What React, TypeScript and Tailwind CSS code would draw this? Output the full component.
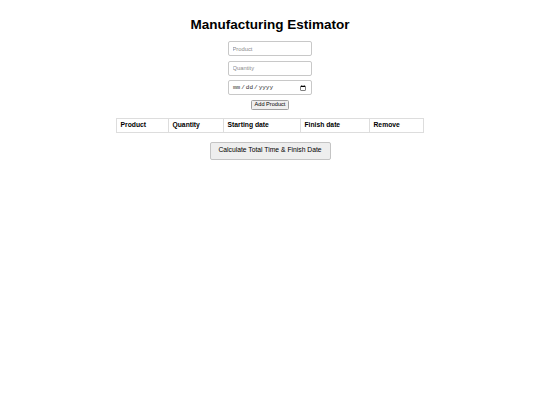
export default function App() {
  const headers = [
    { label: 'Product', w: 'w-[52px]' },
    { label: 'Quantity', w: 'w-[55px]' },
    { label: 'Starting date', w: 'w-[77px]' },
    { label: 'Finish date', w: 'w-[69px]' },
    { label: 'Remove', w: 'w-[54px]' },
  ]

  return (
    <div className="min-h-screen bg-white font-['Liberation_Sans',Arial,sans-serif] text-black">
      <div className="flex flex-col items-center pt-[17px]">
        <h1 className="text-[13.5px] font-bold leading-[16px]">Manufacturing Estimator</h1>

        {/* form */}
        <div className="mt-[8px] flex flex-col items-center gap-[4.5px]">
          <input
            type="text"
            placeholder="Product"
            className="h-[15px] w-[84px] rounded-[2px] border border-[#c8c8c8] px-[3.5px] text-[5.8px] outline-none placeholder:text-[#8a8a8a]"
          />
          <input
            type="number"
            placeholder="Quantity"
            className="h-[15px] w-[84px] rounded-[2px] border border-[#c8c8c8] px-[3.5px] text-[5.8px] outline-none placeholder:text-[#8a8a8a]"
          />
          <input
            type="date"
            className="h-[15px] w-[84px] rounded-[2px] border border-[#c8c8c8] px-[3px] font-['Liberation_Mono',monospace] text-[6px] text-[#333] outline-none"
          />
          <button className="mt-[0.5px] h-[9.5px] rounded-[1.5px] border border-[#a0a0a0] bg-[#efefef] px-[2.5px] text-[5.6px] leading-none">
            Add Product
          </button>
        </div>

        {/* list */}
        <table className="mt-[8px] border-collapse text-left text-[6.75px]">
          <thead>
            <tr>
              {headers.map((h) => (
                <th
                  key={h.label}
                  className={`${h.w} h-[14px] border border-[#dddddd] px-[3.5px] py-0 font-bold leading-none`}
                >
                  {h.label}
                </th>
              ))}
            </tr>
          </thead>
          <tbody></tbody>
        </table>

        <button className="mt-[9px] h-[18px] w-[121px] rounded-[2px] border border-[#c4c4c4] bg-[#eeeeee] text-[6.75px] leading-none">
          Calculate Total Time &amp; Finish Date
        </button>
      </div>
    </div>
  )
}
